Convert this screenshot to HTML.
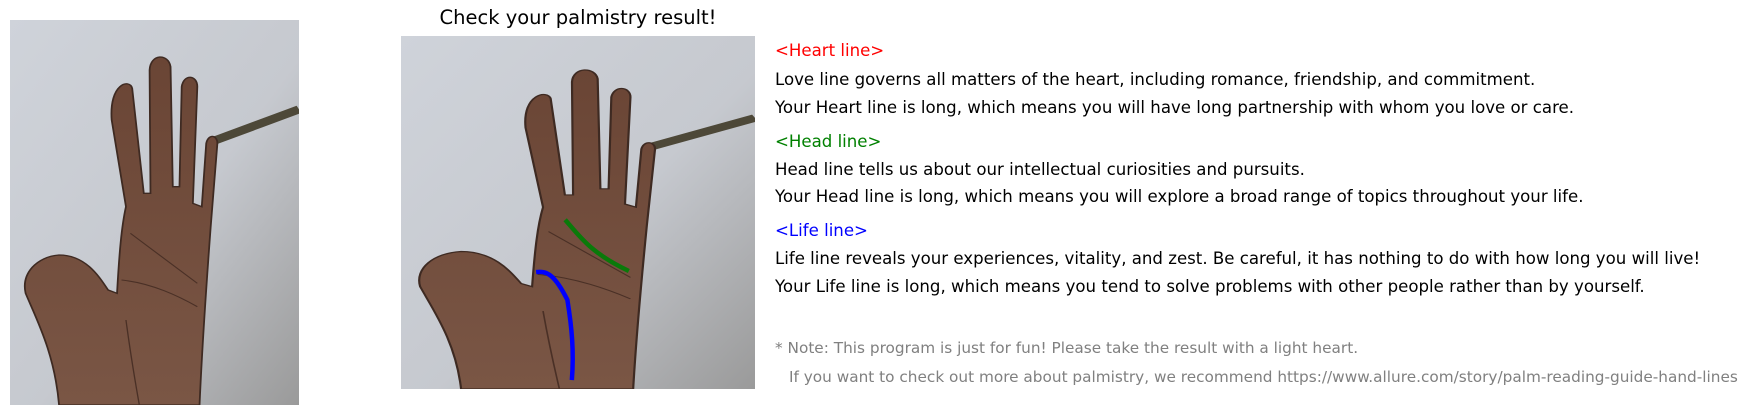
<!DOCTYPE html>
<html><head><meta charset="utf-8"><style>
html,body{margin:0;padding:0;background:#fff;width:1748px;height:415px;overflow:hidden;position:relative;font-family:"DejaVu Sans","Liberation Sans",sans-serif;}
.t{position:absolute;left:775px;font-size:16.6px;color:#000;white-space:nowrap;line-height:20px;}
.n{font-size:15.3px;color:#808080;}
svg{position:absolute;}
</style></head><body>
<svg width="0" height="0" style="position:absolute">
<defs>
<linearGradient id="bg" x1="0" y1="0" x2="1" y2="1">
<stop offset="0" stop-color="#cfd3da"/><stop offset="0.55" stop-color="#c6c9cf"/><stop offset="1" stop-color="#9a9a9a"/>
</linearGradient>
<linearGradient id="sk" x1="0" y1="0" x2="0" y2="1">
<stop offset="0" stop-color="#6a4535"/><stop offset="1" stop-color="#7a5645"/>
</linearGradient>
<symbol id="hand" viewBox="0 0 648 1155" preserveAspectRatio="none">
<rect width="648" height="1155" fill="url(#bg)"/>
<line x1="458" y1="362" x2="648" y2="268" stroke="#4d4838" stroke-width="24"/>
<path d="M110 1155 C100 1000,60 900,35 820 C25 760,60 710,110 705 C170 705,200 770,220 810 L240 820 C245 700,250 620,260 560 L228 300 C222 190,268 175,274 205 L300 520 L315 520 L313 150 C315 100,355 100,360 140 L365 500 L380 500 L385 200 C390 160,420 165,420 200 L410 550 L430 560 L440 370 C445 340,465 345,465 370 L450 620 C440 800,430 1000,425 1155 Z" fill="url(#sk)" stroke="#3e2a22" stroke-width="4"/>
<path d="M270 640 C330 700,390 760,420 790 M250 780 C320 790,380 830,420 860 M260 900 C270 1000,280 1080,290 1155" stroke="#4a3026" stroke-width="3" fill="none"/>
</symbol>
</defs></svg>

<svg style="left:10px;top:20px" width="289" height="385"><use href="#hand" width="289" height="385"/></svg>

<div style="position:absolute;left:401px;top:6px;width:354px;text-align:center;font-size:19.5px;">Check your palmistry result!</div>
<svg style="left:401px;top:36px" width="354" height="353" viewBox="0 0 317 317" preserveAspectRatio="none">
<use href="#hand" width="317" height="317"/>
<path d="M147 165 C160 180,170 195,204 211" stroke="#0a7a0a" stroke-width="4" fill="none"/>
<path d="M121 212 C130 211,137 213,149 237 C153 262,155 283,153 309" stroke="#0000ff" stroke-width="4" fill="none"/>
</svg>

<div class="t" style="top:41px;color:#ff0000">&lt;Heart line&gt;</div>
<div class="t" style="top:70px">Love line governs all matters of the heart, including romance, friendship, and commitment.</div>
<div class="t" style="top:98px">Your Heart line is long, which means you will have long partnership with whom you love or care.</div>
<div class="t" style="top:132px;color:#008000">&lt;Head line&gt;</div>
<div class="t" style="top:160px">Head line tells us about our intellectual curiosities and pursuits.</div>
<div class="t" style="top:187px">Your Head line is long, which means you will explore a broad range of topics throughout your life.</div>
<div class="t" style="top:221px;color:#0000ff">&lt;Life line&gt;</div>
<div class="t" style="top:249px">Life line reveals your experiences, vitality, and zest. Be careful, it has nothing to do with how long you will live!</div>
<div class="t" style="top:277px">Your Life line is long, which means you tend to solve problems with other people rather than by yourself.</div>
<div class="t n" style="top:338px">* Note: This program is just for fun! Please take the result with a light heart.</div>
<div class="t n" style="top:367px;left:789px">If you want to check out more about palmistry, we recommend https://www.allure.com/story/palm-reading-guide-hand-lines</div>
</body></html>
